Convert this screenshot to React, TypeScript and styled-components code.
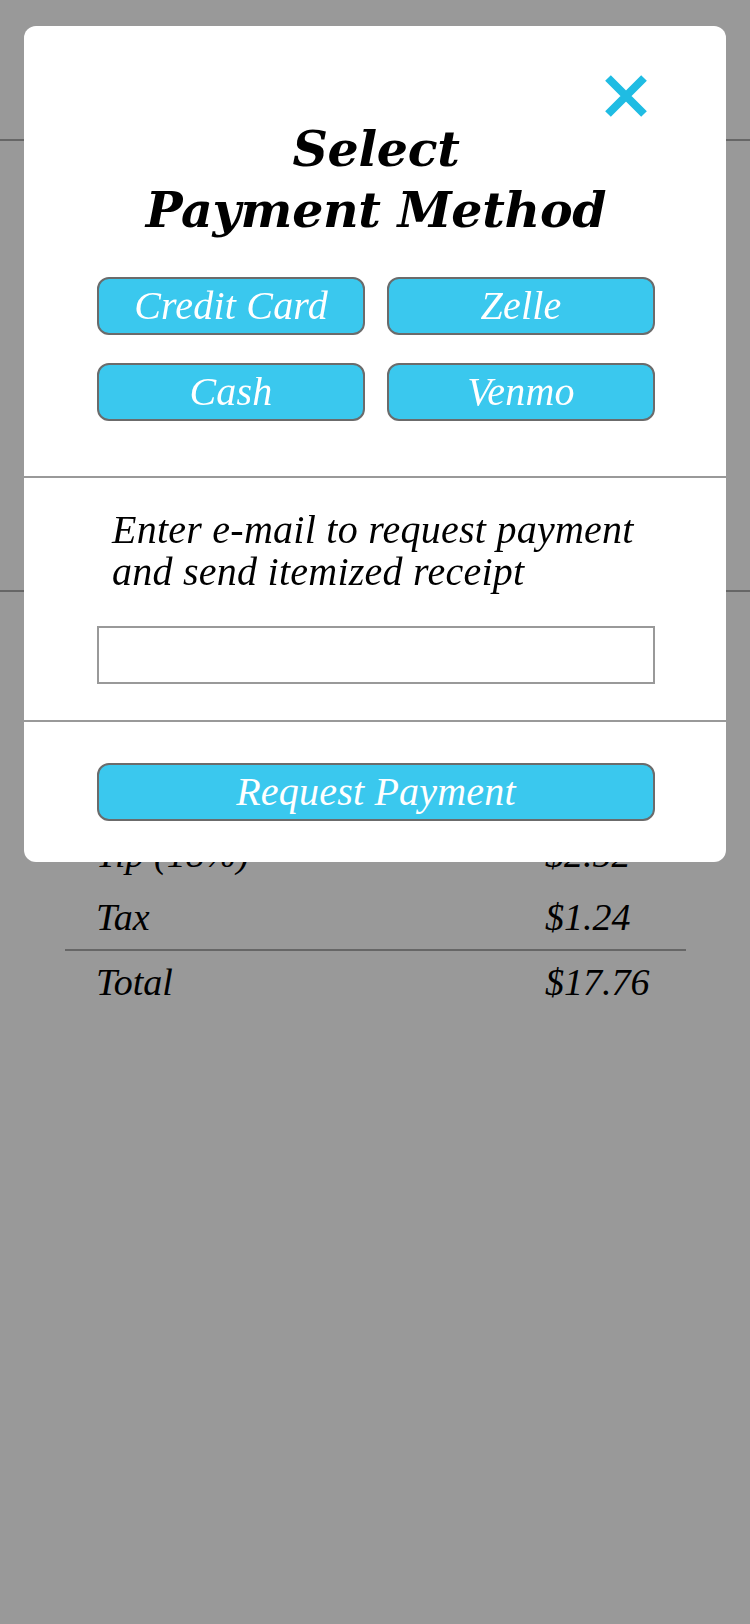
import React from "react";
import styled, { createGlobalStyle } from "styled-components";

const GlobalStyle = createGlobalStyle`
  html, body {
    margin: 0;
    padding: 0;
    background: #ffffff;
  }
  body {
    font-family: "Liberation Serif", "Times New Roman", serif;
    color: #000;
  }
  * { box-sizing: border-box; }
`;

const Page = styled.div`
  min-height: 1624px;
  background: #ffffff;
`;

const TopBar = styled.header`
  height: 141px;
  border-bottom: 2px solid #aaaaaa;
`;

const Summary = styled.section`
  height: 451px;
  border-bottom: 2px solid #aaaaaa;
`;

const Receipt = styled.div`
  margin: 0 64px 0 65px;
  padding-top: 168px;
`;

const Row = styled.div<{ $divider?: boolean }>`
  display: grid;
  grid-template-columns: 449px 1fr;
  padding-left: 31px;
  height: ${(p) => (p.$divider ? 65 : 63)}px;
  line-height: 63px;
  font-size: 38px;
  font-style: italic;
  border-top: ${(p) => (p.$divider ? "2px solid #aaaaaa" : "none")};
`;

const Overlay = styled.div`
  position: fixed;
  inset: 0;
  background: rgba(0, 0, 0, 0.4);
  display: flex;
  flex-direction: column;
  align-items: center;
  padding-top: 26px;
`;

const Modal = styled.div`
  width: 702px;
  background: #ffffff;
  border-radius: 12px;
  overflow: hidden;
  display: flex;
  flex-direction: column;
`;

const Section = styled.div<{ $pt: number; $pb: number; $divider?: boolean }>`
  padding: ${(p) => p.$pt}px 71px ${(p) => p.$pb}px 73px;
  border-bottom: ${(p) => (p.$divider ? "2px solid #999999" : "none")};
  display: flex;
  flex-direction: column;
`;

const CloseRow = styled.div`
  display: flex;
  justify-content: flex-end;
  padding-right: 8px;
`;

const CloseButton = styled.button`
  width: 42px;
  height: 42px;
  padding: 0;
  border: none;
  background: transparent;
  display: block;
  cursor: pointer;
`;

const Title = styled.h1`
  margin: 2px 0 0;
  font-family: "DejaVu Serif", Georgia, serif;
  font-weight: bold;
  font-style: italic;
  font-size: 49px;
  line-height: 61px;
  text-align: center;
  letter-spacing: -0.3px;
`;

const MethodGrid = styled.div`
  margin-top: 36px;
  display: grid;
  grid-template-columns: 1fr 1fr;
  column-gap: 22px;
  row-gap: 28px;
`;

const PillButton = styled.button`
  height: 58px;
  width: 100%;
  border: 2px solid #6b6b6b;
  border-radius: 12px;
  background: #3ac8ee;
  color: #ffffff;
  font-family: "Liberation Serif", "Times New Roman", serif;
  font-style: italic;
  font-size: 40px;
  line-height: 52px;
  letter-spacing: 0.2px;
  padding: 0;
  cursor: pointer;
`;

const Prompt = styled.p`
  margin: 0;
  padding-left: 15px;
  font-size: 40px;
  line-height: 42px;
  letter-spacing: 0.25px;
  font-style: italic;
`;

const EmailInput = styled.input`
  margin-top: 33px;
  height: 58px;
  width: 100%;
  border: 2px solid #999999;
  border-radius: 0;
  background: #ffffff;
  font-family: "Liberation Serif", "Times New Roman", serif;
  font-size: 32px;
  padding: 0 12px;
  outline: none;
`;

const CloseIcon = () => (
  <svg width="42" height="42" viewBox="0 0 42 42">
    <path
      d="M3 3 L39 39 M39 3 L3 39"
      stroke="#1fbce3"
      strokeWidth="8"
      fill="none"
    />
  </svg>
);

export default function App() {
  return (
    <>
      <GlobalStyle />
      <Page>
        <TopBar />
        <Summary />
        <Receipt>
          <Row>
            <span>Subtotal</span>
            <span>$14.00</span>
          </Row>
          <Row>
            <span>Tip (18%)</span>
            <span>$2.52</span>
          </Row>
          <Row>
            <span>Tax</span>
            <span>$1.24</span>
          </Row>
          <Row $divider>
            <span>Total</span>
            <span>$17.76</span>
          </Row>
        </Receipt>
      </Page>
      <Overlay>
        <Modal>
          <Section $pt={49} $pb={55} $divider>
            <CloseRow>
              <CloseButton aria-label="Close">
                <CloseIcon />
              </CloseButton>
            </CloseRow>
            <Title>
              Select
              <br />
              Payment Method
            </Title>
            <MethodGrid>
              <PillButton>Credit Card</PillButton>
              <PillButton>Zelle</PillButton>
              <PillButton>Cash</PillButton>
              <PillButton>Venmo</PillButton>
            </MethodGrid>
          </Section>
          <Section $pt={31} $pb={36} $divider>
            <Prompt>
              Enter e-mail to request payment
              <br />
              and send itemized receipt
            </Prompt>
            <EmailInput type="email" />
          </Section>
          <Section $pt={41} $pb={41}>
            <PillButton>Request Payment</PillButton>
          </Section>
        </Modal>
      </Overlay>
    </>
  );
}
